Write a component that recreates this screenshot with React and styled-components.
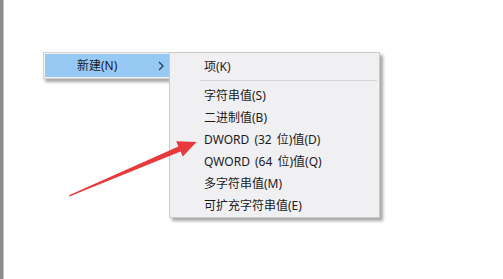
import React from 'react'
import styled, { createGlobalStyle } from 'styled-components'

const items = [
  '字符串值(S)',
  '二进制值(B)',
  'DWORD (32 位)值(D)',
  'QWORD (64 位)值(Q)',
  '多字符串值(M)',
  '可扩充字符串值(E)',
]

const App = () => (
  <>
    <GlobalStyle />
    <Page>
      <LeftStrip />
      <ParentMenu>
        <ParentItem>
          <span>新建(N)</span>
          <Chevron viewBox="0 0 6 10">
            <polyline points="1,1 5,5 1,9" />
          </Chevron>
        </ParentItem>
      </ParentMenu>
      <SubMenu>
        <MenuItem>项(K)</MenuItem>
        <Separator />
        {items.map(label => (
          <MenuItem key={label}>{label}</MenuItem>
        ))}
      </SubMenu>
      <Arrow viewBox="0 0 503 279">
        <polygon points="69,195.2 178.4,146.4 176.2,141.2 196.5,142 182.8,156.6 180.6,151.4 69.4,196.4" />
      </Arrow>
    </Page>
  </>
)

export default App

// #region styled-components
const GlobalStyle = createGlobalStyle`
  html, body {
    margin: 0;
    padding: 0;
    background: #ffffff;
  }
`

const Page = styled.div`
  position: relative;
  width: 503px;
  height: 279px;
  overflow: hidden;
  background: #ffffff;
  font-family: 'Noto Sans', 'Noto Sans CJK SC', sans-serif;
  font-size: 12px;
  color: #1b1b1b;
`

const LeftStrip = styled.div`
  width: 3px;
  height: 100%;
  background: #8c8c8c;
  border-right: 1px solid #c4c4c4;
`

const ParentMenu = styled.div`
  position: absolute;
  left: 43px;
  top: 52px;
  width: 125px;
  padding: 1px;
  border: 1px solid #d2d2d2;
  background: #f2f2f2;
  box-shadow: 2px 3px 3px rgba(0, 0, 0, 0.35);
`

const ParentItem = styled.div`
  display: flex;
  align-items: center;
  justify-content: space-between;
  height: 23px;
  padding: 1px 6px 0 32px;
  box-sizing: border-box;
  background: #97c9f5;
  line-height: 22px;
`

const Chevron = styled.svg`
  width: 6px;
  height: 10px;
  fill: none;
  stroke: #2c3e57;
  stroke-width: 1.3;
`

const SubMenu = styled.div`
  position: absolute;
  left: 169px;
  top: 52px;
  width: 209px;
  padding: 2px 0 1px;
  border: 1px solid #cbcbcb;
  background: #f0eff2;
  box-shadow: 3px 3px 3px rgba(0, 0, 0, 0.35);
`

const MenuItem = styled.div`
  height: 22px;
  padding: 2px 0 0 34px;
  box-sizing: border-box;
  line-height: 20px;
  white-space: nowrap;
  word-spacing: 2px;
`

const Separator = styled.div`
  height: 1px;
  margin: 3px 2px 3px 30px;
  background: #d6d6d6;
`

const Arrow = styled.svg`
  position: absolute;
  left: 0;
  top: 0;
  width: 503px;
  height: 279px;
  fill: #e8393c;
`
// #endregion
